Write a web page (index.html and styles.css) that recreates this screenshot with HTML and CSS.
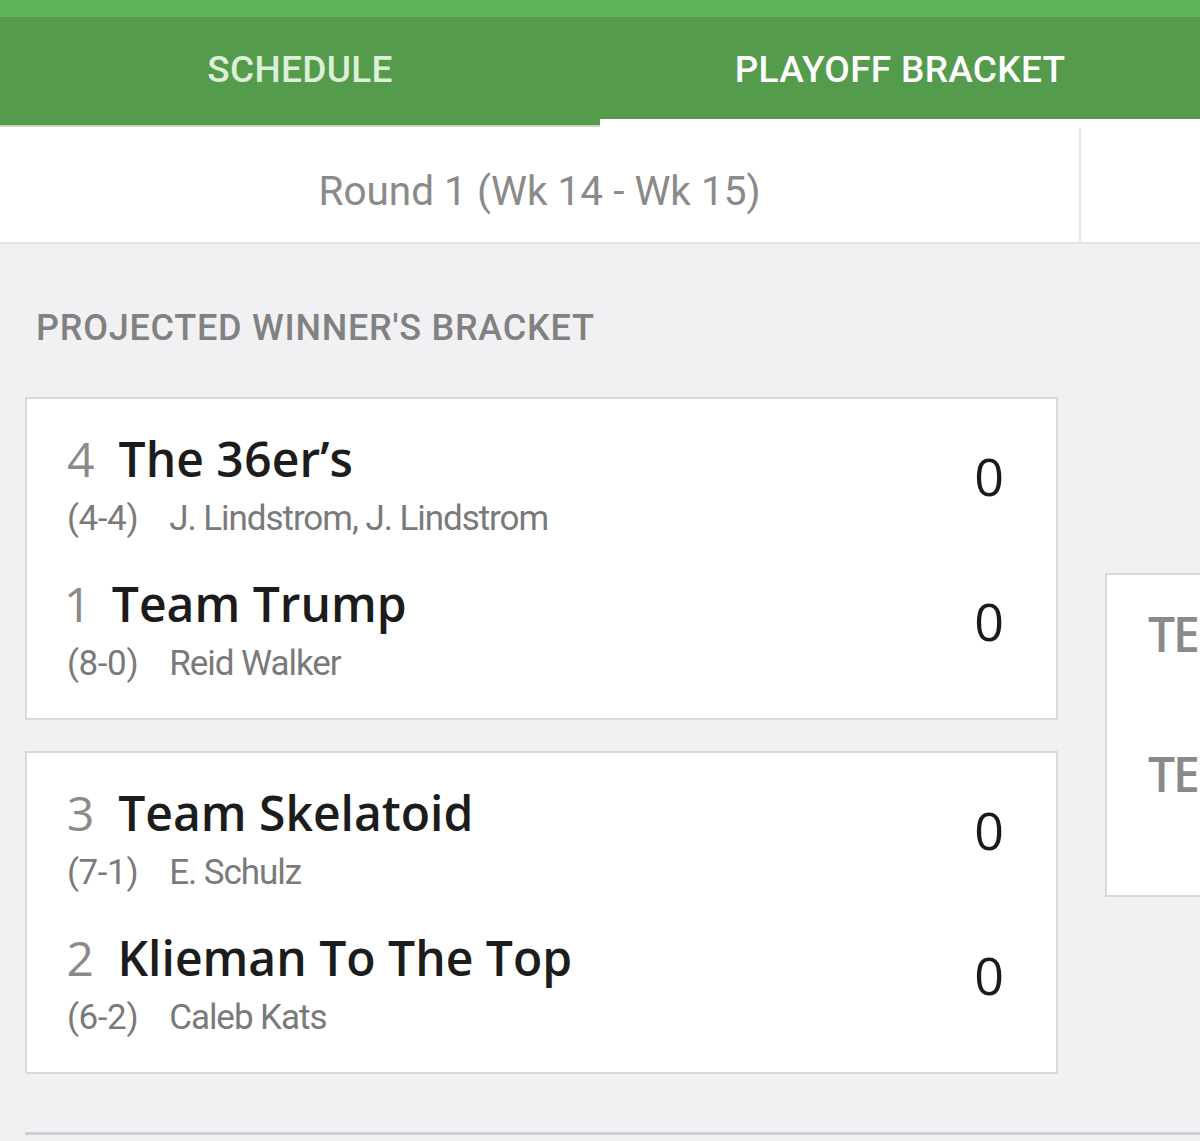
FILE: index.html
```html
<!DOCTYPE html>
<html>
<head>
<meta charset="utf-8">
<link rel="stylesheet" href="styles.css">
</head>
<body>
<div class="topstripe"></div>
<nav class="tabs">
  <div class="tab">SCHEDULE</div>
  <div class="tab active">PLAYOFF BRACKET</div>
</nav>
<div class="rounds">
  <div class="round">Round 1 (Wk 14 - Wk 15)</div>
  <div class="round next"></div>
</div>
<section class="bracket">
  <h2 class="section-title">PROJECTED WINNER'S BRACKET</h2>
  <div class="columns">
    <div class="col-main">
      <div class="matchup">
        <div class="team">
          <div class="info">
            <div class="name-line"><span class="seed">4</span><span class="name">The 36er’s</span></div>
            <div class="sub-line"><span class="record">(4-4)</span><span class="owner">J. Lindstrom, J. Lindstrom</span></div>
          </div>
          <div class="score">0</div>
        </div>
        <div class="team">
          <div class="info">
            <div class="name-line"><span class="seed">1</span><span class="name">Team Trump</span></div>
            <div class="sub-line"><span class="record">(8-0)</span><span class="owner">Reid Walker</span></div>
          </div>
          <div class="score">0</div>
        </div>
      </div>
      <div class="matchup">
        <div class="team">
          <div class="info">
            <div class="name-line"><span class="seed">3</span><span class="name">Team Skelatoid</span></div>
            <div class="sub-line"><span class="record">(7-1)</span><span class="owner">E. Schulz</span></div>
          </div>
          <div class="score">0</div>
        </div>
        <div class="team">
          <div class="info">
            <div class="name-line"><span class="seed">2</span><span class="name">Klieman To The Top</span></div>
            <div class="sub-line"><span class="record">(6-2)</span><span class="owner">Caleb Kats</span></div>
          </div>
          <div class="score">0</div>
        </div>
      </div>
    </div>
    <div class="col-next">
      <div class="matchup next-card">
        <div class="tbd">TE</div>
        <div class="tbd">TE</div>
      </div>
    </div>
  </div>
  <div class="divider"></div>
</section>
</body>
</html>
```
FILE: styles.css
```css
* { box-sizing: border-box; }
html, body { margin: 0; padding: 0; }
body {
  width: 1200px;
  height: 1141px;
  overflow: hidden;
  background: #f1f1f3;
  font-family: Roboto, "Liberation Sans", sans-serif;
}
.topstripe {
  height: 17px;
  background: #5eb35b;
}
.tabs {
  display: flex;
  height: 110px;
  background: #559b4c;
  border-bottom: 2px solid #c9d3c6;
}
.tab {
  flex: 1;
  display: flex;
  align-items: center;
  justify-content: center;
  font-size: 37px;
  font-weight: 500;
  color: #dcefd8;
  letter-spacing: 0.3px;
  padding-bottom: 3px;
}
.tab.active {
  color: #ffffff;
  position: relative;
}
.tab.active::after {
  content: "";
  position: absolute;
  left: 0; right: 0; bottom: -2px;
  height: 8px;
  background: #ffffff;
}
.rounds {
  display: flex;
  height: 117px;
  background: #fff;
  border-bottom: 2px solid #e3e3e6;
}
.round {
  width: 1081px;
  display: flex;
  align-items: center;
  justify-content: center;
  padding-top: 12px;
  font-size: 40.5px;
  font-weight: 400;
  color: #8a8a8a;
  border-right: 2px solid #e6e6e8;
}
.round.next { flex: 1; border-right: none; }
.bracket {
  padding: 0 0 0 25px;
}
.section-title {
  margin: 0;
  padding: 64px 0 0 11px;
  font-size: 36px;
  font-weight: 500;
  color: #818181;
  line-height: 40px;
  letter-spacing: 0.75px;
}
.columns {
  display: flex;
  margin-top: 49px;
}
.col-main {
  width: 1033px;
  flex-shrink: 0;
  display: flex;
  flex-direction: column;
  gap: 31px;
}
.matchup {
  background: #fff;
  border: 2px solid #d9d9dc;
  height: 323px;
  padding: 31px 52px 0 40px;
}
.team {
  display: flex;
  justify-content: space-between;
  align-items: flex-start;
  height: 145px;
}
.info {
  display: flex;
  flex-direction: column;
}
.name-line {
  display: flex;
  align-items: baseline;
  height: 58px;
  line-height: 58px;
  font-family: "Open Sans", Roboto, sans-serif;
  font-variant-numeric: proportional-nums;
}
.seed {
  font-size: 48px;
  color: #8a8a8a;
  font-weight: 500;
  margin-right: 24px;
}
.name {
  font-size: 48px;
  color: #1c1c1c;
  font-weight: 600;
}
.sub-line {
  display: flex;
  font-size: 35px;
  color: #7a7a7a;
  line-height: 40px;
  margin-top: 11px;
}
.record { margin-right: 31px; letter-spacing: -0.4px; }
.owner { letter-spacing: -1.05px; }
.score {
  font-family: "Open Sans", Roboto, sans-serif;
  font-size: 52px;
  line-height: 58px;
  font-weight: 400;
  color: #1a1a1a;
  margin-top: 17px;
}
.col-next {
  flex: 1;
  min-width: 0;
  padding-left: 47px;
  padding-top: 176px;
}
.next-card {
  height: 324px;
  border-right: none;
  padding: 30px 0 0 41px;
  overflow: hidden;
}
.tbd {
  font-family: "Open Sans", Roboto, sans-serif;
  font-size: 48px;
  font-weight: 600;
  color: #8a8a8a;
  height: 140px;
  line-height: 58px;
  letter-spacing: -2px;
  white-space: nowrap;
}
.divider {
  margin-top: 58px;
  height: 3px;
  background: #cfcfd3;
}
```
